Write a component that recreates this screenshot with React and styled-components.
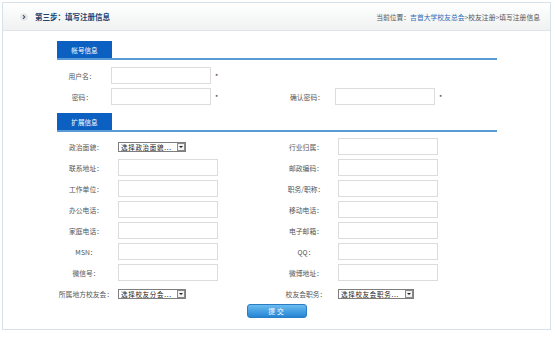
import React from 'react';
import styled, { createGlobalStyle } from 'styled-components';

const GlobalStyle = createGlobalStyle`
    * { box-sizing: border-box; }
    body {
        margin: 0;
        background: #fff;
        font-family: "Noto Sans CJK SC", "Noto Sans", sans-serif;
    }
`;

const Frame = styled.div`
    margin: 2px 0 0 2px;
    width: 549px;
    height: 328px;
    border: 1px solid #d6e1ea;
    background: #fff;
    display: flex;
    flex-direction: column;
`;

const Header = styled.div`
    height: 28px;
    flex-shrink: 0;
    display: flex;
    align-items: center;
    padding: 0 10px 0 17px;
    background: linear-gradient(#ffffff, #f0f1f2);
    border-bottom: 1px solid #e2e5e8;
`;

const Title = styled.div`
    margin-left: 7px;
    font-size: 7.5px;
    font-weight: 700;
    color: #24406c;
`;

const Crumbs = styled.div`
    margin-left: auto;
    font-size: 6.8px;
    color: #555;
`;

const CrumbLink = styled.a`
    color: #2f6db5;
    text-decoration: none;
`;

const Body = styled.div`
    padding: 10px 0 0 54px;
    display: flex;
    flex-direction: column;
`;

const SectionHead = styled.div`
    width: 440px;
    height: 19px;
    margin-top: ${p => p.$top || 0}px;
    border-bottom: 2px solid #5b9bd5;
`;

const Tab = styled.div`
    width: 55px;
    height: 17px;
    background: #0c60c2;
    color: #fff;
    font-size: 6.6px;
    display: flex;
    align-items: center;
    justify-content: center;
`;

const Rows = styled.div`
    display: flex;
    flex-direction: column;
    gap: 4px;
    padding-top: ${p => p.$top}px;
`;

const Row = styled.div`
    display: flex;
    height: 17px;
    align-items: center;
`;

const Field = styled.div`
    display: flex;
    align-items: center;
    width: ${p => p.$w}px;
`;

const Label = styled.label`
    width: ${p => p.$w}px;
    text-align: center;
    font-size: 6.8px;
    color: #555;
    white-space: nowrap;
`;

const Input = styled.input`
    width: 100px;
    height: 17px;
    margin: 0 0 0 ${p => p.$gap}px;
    padding: 0 3px;
    border: 1px solid #dcdcdc;
    font-size: 7px;
    outline: none;
`;

const Star = styled.span`
    margin-left: 4px;
    font-size: 7px;
    color: #333;
`;

const SelectBox = styled.div`
    margin-left: 3px;
    width: ${p => p.$w}px;
    height: 10px;
    border: 1px solid #7d7d7d;
    display: flex;
    align-items: center;
    padding-left: 2px;
    background: #fff;
`;

const SelectText = styled.span`
    font-size: 6.5px;
    letter-spacing: 0.7px;
    color: #222;
    white-space: nowrap;
    overflow: hidden;
`;

const Arrow = styled.span`
    margin-left: auto;
    width: 8px;
    height: 8px;
    border: 1px solid #8a8a8a;
    background: #f2f2f2;
    display: flex;
    align-items: center;
    justify-content: center;
    &::after {
        content: '';
        border-left: 2px solid transparent;
        border-right: 2px solid transparent;
        border-top: 2px solid #222;
    }
`;

const Submit = styled.button`
    align-self: flex-start;
    margin: 2px 0 0 190px;
    width: 60px;
    height: 14px;
    border: 1px solid #2a7dc2;
    border-radius: 3px;
    background: linear-gradient(#6bbcf0, #2585d4);
    color: #fff;
    font-family: inherit;
    font-size: 6.8px;
    letter-spacing: 2px;
    padding: 0;
`;

const Chevron = () => (
    <svg width="8" height="8" viewBox="0 0 8 8">
        <circle cx="4" cy="4" r="3.8" fill="#e4e7ea" />
        <path d="M3 2.2 L4.8 4 L3 5.8" fill="none" stroke="#4a5560" strokeWidth="1.1" />
    </svg>
);

const Select = ({ w, text }) => (
    <SelectBox $w={w}>
        <SelectText>{text}</SelectText>
        <Arrow />
    </SelectBox>
);

const account = [
    [['用户名：', true], null],
    [['密码：', true], ['确认密码：', true]],
];

const extra = [
    [['政治面貌：', 'select', '选择政治面貌...'], ['行业归属：']],
    [['联系地址：'], ['邮政编码：']],
    [['工作单位：'], ['职务/职称：']],
    [['办公电话：'], ['移动电话：']],
    [['家庭电话：'], ['电子邮箱：']],
    [['MSN：'], ['QQ：']],
    [['微信号：'], ['微博地址：']],
    [['所属地方校友会：', 'select', '选择校友分会...'], ['校友会职务：', 'select', '选择校友会职务...']],
];

const App = () => (
    <>
        <GlobalStyle />
        <Frame>
            <Header>
                <Chevron />
                <Title>第三步：填写注册信息</Title>
                <Crumbs>
                    当前位置：<CrumbLink href="#">吉首大学校友总会</CrumbLink>&gt;校友注册&gt;填写注册信息
                </Crumbs>
            </Header>
            <Body>
                <SectionHead><Tab>帐号信息</Tab></SectionHead>
                <Rows $top={7}>
                    {account.map((row, i) => (
                        <Row key={i}>
                            {row.map((f, j) => f ? (
                                <Field key={j} $w={225}>
                                    <Label $w={50}>{f[0]}</Label>
                                    <Input $gap={j === 0 ? 4 : 3} type={i === 0 ? 'text' : 'password'} />
                                    <Star>*</Star>
                                </Field>
                            ) : (
                                <Field key={j} $w={225} />
                            ))}
                        </Row>
                    ))}
                </Rows>
                <SectionHead $top={8}><Tab>扩展信息</Tab></SectionHead>
                <Rows $top={6}>
                    {extra.map((row, i) => (
                        <Row key={i}>
                            {row.map((f, j) => (
                                <Field key={j} $w={220}>
                                    <Label $w={58}>{f[0]}</Label>
                                    {f[1] === 'select'
                                        ? <Select w={j === 0 ? 68 : 76} text={f[2]} />
                                        : <Input $gap={3} type="text" />}
                                </Field>
                            ))}
                        </Row>
                    ))}
                </Rows>
                <Submit>提交</Submit>
            </Body>
        </Frame>
    </>
);

export default App;
